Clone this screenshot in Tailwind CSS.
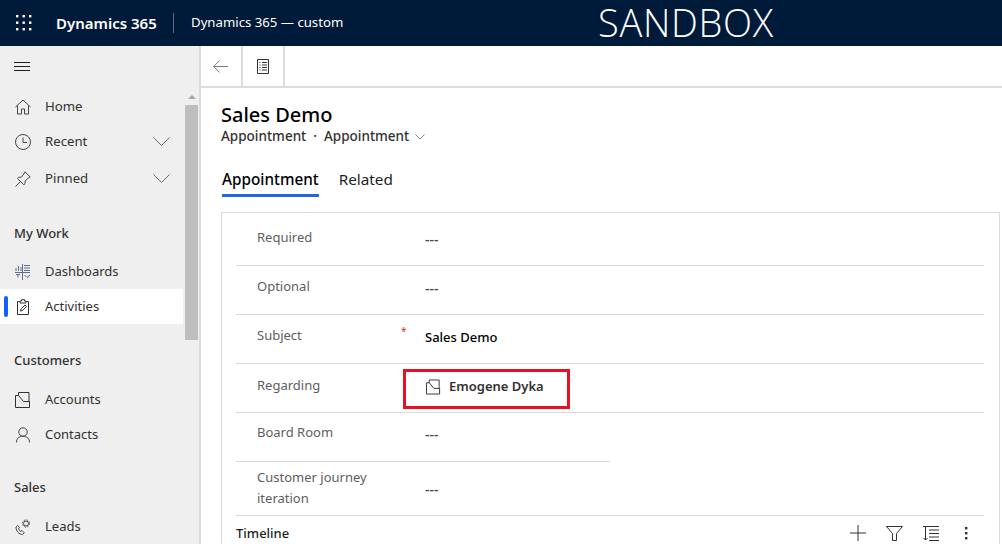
<!DOCTYPE html>
<html lang="en">
<head>
  <meta charset="UTF-8" />
  <title>Sales Demo - Dynamics 365</title>
  <script src="https://cdn.jsdelivr.net/npm/@tailwindcss/browser@4"></script>
</head>
<body class="h-[544px] w-[1002px] overflow-hidden bg-white font-['Noto_Sans',sans-serif] text-[14px] text-[#323130] flex flex-col">

<!-- top bar -->
<header class="h-[46px] shrink-0 bg-[#001a3a] text-white flex items-center">
  <div class="w-[48px] pl-[16px] shrink-0">
    <svg width="16" height="16" viewBox="0 0 16 16" fill="#fff"><rect x="0" y="0" width="2.4" height="2.4"/><rect x="6.5" y="0" width="2.4" height="2.4"/><rect x="13" y="0" width="2.4" height="2.4"/><rect x="0" y="6.5" width="2.4" height="2.4"/><rect x="6.5" y="6.5" width="2.4" height="2.4"/><rect x="13" y="6.5" width="2.4" height="2.4"/><rect x="0" y="13" width="2.4" height="2.4"/><rect x="6.5" y="13" width="2.4" height="2.4"/><rect x="13" y="13" width="2.4" height="2.4"/></svg>
  </div>
  <div class="ml-[8px] w-[117px] text-[15px] font-semibold whitespace-nowrap">Dynamics 365</div>
  <div class="h-[20px] w-px bg-[#5b6b80]"></div>
  <div class="ml-[17px] w-[230px] text-[13.2px] whitespace-nowrap">Dynamics 365 — custom</div>
  <div class="ml-[177px] w-[175px] text-[38px] leading-[42px] mt-[-3px] font-['Open_Sans',sans-serif] font-light tracking-[0.7px] whitespace-nowrap">SANDBOX</div>
</header>

<div class="flex flex-1 min-h-0">
  <!-- side nav -->
  <aside class="w-[201px] shrink-0 bg-[#efefef] border-r-2 border-[#dcdcdc] flex flex-col overflow-hidden">
    <div class="h-[42px] shrink-0 pl-[14px] flex items-center">
      <svg width="17" height="10" viewBox="0 0 17 10" stroke="#201f1e" fill="none"><path d="M0 .5h16M0 4.500h16M0 8.500h16"/></svg>
    </div>
    <div class="flex flex-1 min-h-0">
      <nav class="w-[183px] shrink-0 pt-[1px]">
        <a class="h-[35px] flex items-center pl-[15px]">
          <svg class="w-[16px] h-[16px] mr-[14px]" viewBox="0 0 16 16" fill="none" stroke="#484644"><path d="M.5 8 8 1l7.500 7M2.500 6.500V15h4v-5h3v5h4V6.500"/></svg>
          <span class="text-[13.2px]">Home</span>
        </a>
        <a class="h-[35px] flex items-center pl-[15px]">
          <svg class="w-[16px] h-[16px] mr-[14px]" viewBox="0 0 16 16" fill="none" stroke="#484644"><circle cx="8" cy="8" r="7.500"/><path d="M8 3.500V8.500H12"/></svg>
          <span class="text-[13.2px] flex-1">Recent</span>
          <svg class="mr-[13px]" width="17" height="9" viewBox="0 0 17 9" fill="none" stroke="#5a6f8c"><path d="M.5.500l8 8 8-8"/></svg>
        </a>
        <a class="h-[39px] flex items-center pl-[15px]">
          <svg class="w-[16px] h-[16px] mr-[14px]" viewBox="0 0 16 16" fill="none" stroke="#484644"><path d="M10 .8 15.200 6 14 6.500l-3.800 3.300-.2 3-1.200 1L2.500 7.500l1-1.200 3-.2L9.500 2zM5.500 10.500.5 15.500"/></svg>
          <span class="text-[13.2px] flex-1">Pinned</span>
          <svg class="mr-[13px]" width="17" height="9" viewBox="0 0 17 9" fill="none" stroke="#5a6f8c"><path d="M.5.500l8 8 8-8"/></svg>
        </a>

        <div class="h-[18px] mt-[26px] pl-[14px] text-[13px] font-medium leading-[18px]">My Work</div>
        <a class="h-[34px] mt-[13px] flex items-center pl-[15px]">
          <svg class="w-[16px] h-[16px] mr-[14px]" viewBox="0 0 16 16" fill="none" stroke="#5a6f8c"><path d="M7.500 0v16M0 8.500h15M1 7V4M3.500 7V2M6 7V3M9 1.500h6M9 4h6M9 6.500h6M1 10.500h4M3 10.500v3M9.500 11l2.500 2.500 3-2.500"/></svg>
          <span class="text-[13px]">Dashboards</span>
        </a>
        <a class="h-[35px] bg-white flex items-center pl-[4px]">
          <span class="w-[4px] h-[21px] rounded-full bg-[#0f62fe] mr-[7px]"></span>
          <svg class="w-[16px] h-[16px] mr-[14px]" viewBox="0 0 16 16" fill="none" stroke="#323130"><path d="M4.500 2.500h-2v13h11v-13h-2M5 4V2h1.500V.7h3V2H11v2zM5.500 12l.7-2.300L10 6l1.500 1.500-3.700 3.800z"/></svg>
          <span class="text-[13px]">Activities</span>
        </a>

        <div class="h-[18px] mt-[27px] pl-[14px] text-[13px] font-medium leading-[18px]">Customers</div>
        <a class="h-[35px] mt-[13px] flex items-center pl-[15px]">
          <svg class="w-[16px] h-[16px] mr-[14px]" viewBox="0 0 16 16" fill="none" stroke="#323130"><path d="M.5 15.500V3.500h3l5 6h6v6zM3.500 3.500V.5h10.500v9"/></svg>
          <span class="text-[13px]">Accounts</span>
        </a>
        <a class="h-[35px] flex items-center pl-[15px]">
          <svg class="w-[16px] h-[16px] mr-[14px]" viewBox="0 0 16 16" fill="none" stroke="#484644"><circle cx="8" cy="5" r="4.200"/><path d="M1.500 15.500c0-4 2.500-6.300 6.500-6.300s6.500 2.300 6.500 6.300"/></svg>
          <span class="text-[13px]">Contacts</span>
        </a>

        <div class="h-[18px] mt-[26px] pl-[14px] text-[13px] font-medium leading-[18px]">Sales</div>
        <a class="h-[35px] mt-[13px] flex items-center pl-[15px]">
          <svg class="w-[16px] h-[16px] mr-[14px]" viewBox="0 0 16 16" fill="none" stroke="#484644"><path d="M2.700 6.500 1 8c0 4 3 7.500 6.500 7.500l1.800-1.700-2.300-2.300-1.500 1-2-2.700 1-1.500z"/><circle cx="11" cy="4.500" r="2.500"/><circle cx="11" cy="4.500" r="3.600" stroke-dasharray="1.500 1.330"/></svg>
          <span class="text-[13px]">Leads</span>
        </a>
      </nav>
      <!-- scrollbar -->
      <div class="w-[15px] ml-[2px] flex flex-col">
        <div class="h-[17px] flex items-center justify-center">
          <span class="w-0 h-0 border-x-[4px] border-x-transparent border-b-[4px] border-b-[#a6a6a6]"></span>
        </div>
        <div class="h-[235px] w-[13px] bg-[#bebebe]"></div>
      </div>
    </div>
  </aside>

  <main class="flex-1 min-w-0 flex flex-col">
    <!-- command bar -->
    <div class="h-[42px] shrink-0 border-b-2 border-[#dcdcdc] flex">
      <div class="w-[42px] border-r-2 border-[#dcdcdc] flex items-center justify-center">
        <svg class="mt-[1px]" width="16" height="13" viewBox="0 0 16 13" fill="none" stroke="#7a7a7a"><path d="M6.500.5.700 6.500l5.800 6M.7 6.500H15"/></svg>
      </div>
      <div class="w-[42px] border-r-2 border-[#dcdcdc] flex items-center justify-center">
        <svg width="12" height="15" viewBox="0 0 12 15" fill="none" stroke="#323130"><path d="M.5.500h11v14H.5zM2.500 3.500h1M5 3.500h5M2.500 6h1M5 6h5M2.500 8.500h1M5 8.500h5M2.500 11h1M5 11h5"/></svg>
      </div>
    </div>

    <div class="pl-[20px] pr-[2px] flex-1 min-h-0">
      <h1 class="mt-[13px] h-[26px] text-[20px] leading-[27px] font-medium text-black">Sales Demo</h1>
      <div class="h-[19px] flex items-center text-[13.5px] font-medium leading-[19px]">
        <span>Appointment</span><span class="mx-[7px]">·</span><span>Appointment</span>
        <svg class="ml-[6px]" width="10" height="6" viewBox="0 0 10 6" fill="none" stroke="#8a8886"><path d="M.5.500 5 5 9.500.500"/></svg>
      </div>
      <div class="mt-[21px] flex gap-[20px] text-[15.300px] leading-[24px] ml-[1px]">
        <div class="h-[30px] border-b-[3px] border-[#2266e3] font-medium text-black">Appointment</div>
        <div class="h-[30px] text-[#201f1e]">Related</div>
      </div>

      <!-- form card -->
      <section class="mt-[15px] h-[332px] border border-b-0 border-[#dcdcdc] pt-[4px] pl-[14px] pr-[15px]">
        <div class="h-[49px] border-b border-[#d8d8d8] flex">
          <div class="w-[189px] pl-[21px] pt-[11px] text-[13px] text-[#605e5c]">Required</div>
          <div class="pt-[12px] text-[14px] font-medium text-[#484644]">---</div>
        </div>
        <div class="h-[49px] border-b border-[#d8d8d8] flex">
          <div class="w-[189px] pl-[21px] pt-[11px] text-[13px] text-[#605e5c]">Optional</div>
          <div class="pt-[12px] text-[14px] font-medium text-[#484644]">---</div>
        </div>
        <div class="h-[49px] border-b border-[#d8d8d8] flex">
          <div class="w-[165px] pl-[21px] pt-[11px] text-[13px] text-[#605e5c]">Subject</div>
          <div class="w-[24px] pt-[9px] text-[10px] text-[#d13438]">*</div>
          <div class="pt-[13px] text-[13px] font-medium text-black">Sales Demo</div>
        </div>
        <div class="h-[49px] border-b border-[#d8d8d8] flex relative">
          <div class="w-[190px] pl-[21px] pt-[12px] text-[13px] text-[#605e5c]">Regarding</div>
          <div class="pt-[13px] flex items-start gap-[8px] text-[13px] font-semibold text-[#323130]">
            <svg class="mt-[2px]" width="15" height="16" viewBox="0 0 16 16" fill="none" stroke="#323130"><path d="M.5 15.500V3.500h3l5 6h6v6zM3.500 3.500V.5h10.500v9"/></svg>
            Emogene Dyka
          </div>
          <!-- annotation box drawn on the screenshot -->
          <div class="absolute left-[167px] top-[5px] w-[167px] h-[40px] border-[3px] border-[#e81123]"></div>
        </div>
        <div class="h-[49px] flex w-[374px] border-b border-[#d8d8d8]">
          <div class="w-[189px] pl-[21px] pt-[10px] text-[13px] text-[#605e5c]">Board Room</div>
          <div class="pt-[11px] text-[14px] font-medium text-[#484644]">---</div>
        </div>
        <div class="h-[54px] border-b border-[#d8d8d8] flex">
          <div class="w-[189px] pl-[21px] pt-[5px] text-[13px] leading-[21px] text-[#605e5c]">Customer journey<br />iteration</div>
          <div class="pt-[17px] text-[14px] font-medium text-[#484644]">---</div>
        </div>
        <div class="h-[28px] pt-[7px] flex items-start justify-between">
          <div class="h-[20px] leading-[20px] text-[13px] font-medium text-[#201f1e]">Timeline</div>
          <div class="h-[20px] flex items-center gap-[20px] pr-[16px]">
            <svg width="16" height="16" viewBox="0 0 16 16" fill="none" stroke="#323130"><path d="M8 0v16M0 8h16"/></svg>
            <svg width="17" height="15" viewBox="0 0 17 15" fill="none" stroke="#323130"><path d="M.5.500h16l-6 7v7h-4v-7z"/></svg>
            <svg width="16" height="15" viewBox="0 0 16 15" fill="none" stroke="#323130"><path d="M0 .5h16M6 4h10M6 7.500h10M6 11h10M6 14.500h10M2.500 1v13M.5 12l2 2 2-2"/></svg>
            <svg class="ml-[6px]" width="3" height="14" viewBox="0 0 3 14" fill="#323130"><rect x="0" y="1" width="2.400" height="2.400"/><rect x="0" y="6" width="2.400" height="2.400"/><rect x="0" y="11" width="2.400" height="2.400"/></svg>
          </div>
        </div>
      </section>
    </div>
  </main>
</div>

</body>
</html>
